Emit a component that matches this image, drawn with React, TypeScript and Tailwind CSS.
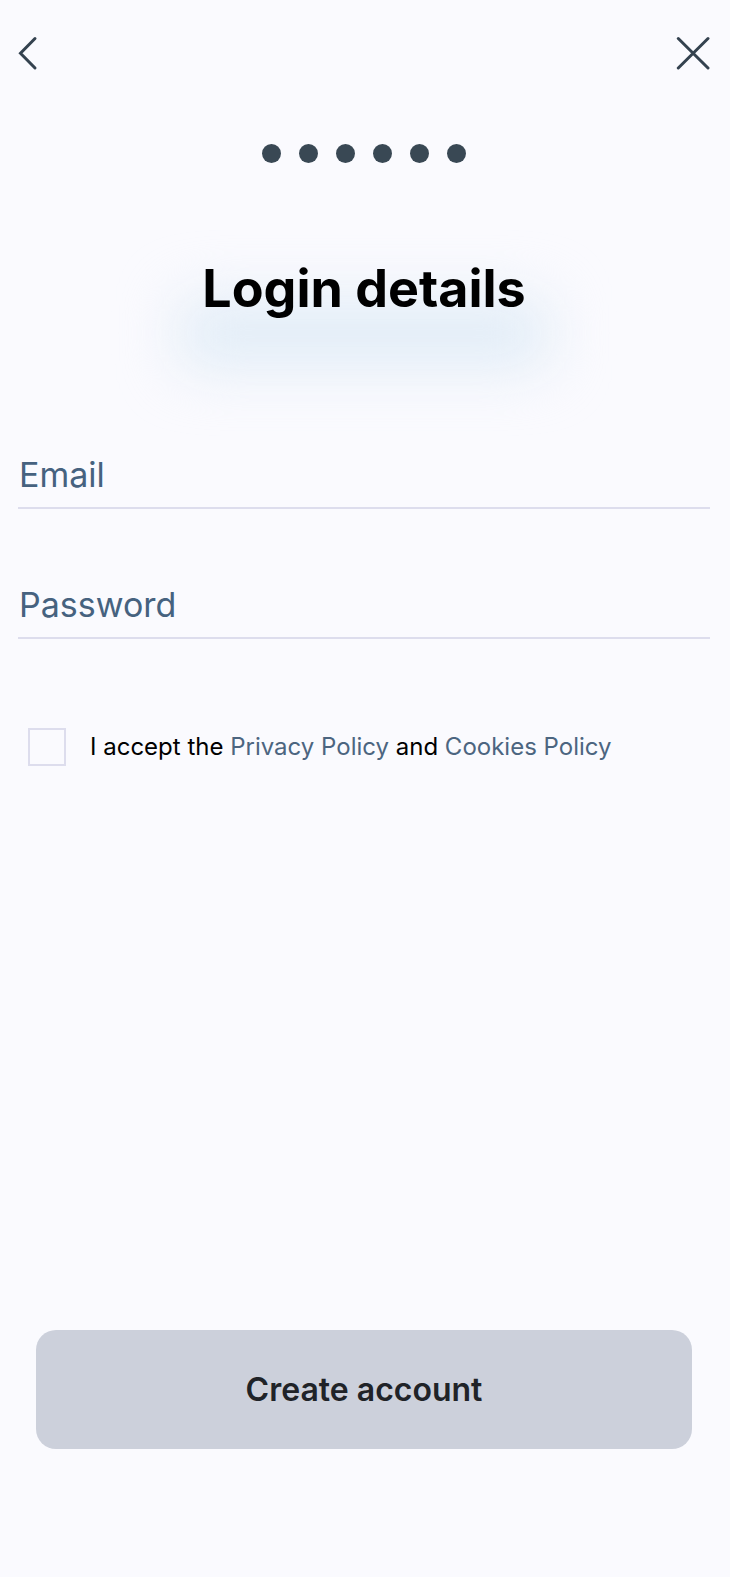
import React from "react";

function Field({ id, label, type }: { id: string; label: string; type: string }) {
  return (
    <div className="grid h-[66px] border-b-2 border-[#dddded] text-[34px] leading-[64px] text-[#46627f]">
      <input
        id={id}
        type={type}
        placeholder=" "
        className="peer col-start-1 row-start-1 w-full bg-transparent px-px outline-none"
      />
      <label
        htmlFor={id}
        className="pointer-events-none col-start-1 row-start-1 px-px peer-[:not(:placeholder-shown)]:invisible"
      >
        {label}
      </label>
    </div>
  );
}

export default function App() {
  return (
    <main className="flex min-h-screen flex-col bg-[#fafafe] pt-9 pr-5 pb-32 pl-[18px] font-['Inter',sans-serif] text-black">
      <header className="flex items-center justify-between">
        <button type="button" aria-label="Back">
          <svg className="block" width="20" height="36" viewBox="0 0 20 36" fill="none" stroke="#34424f" strokeWidth="3" strokeLinecap="round">
            <path d="M17 2.5L2.5 17.3L17 32" />
          </svg>
        </button>
        <button type="button" aria-label="Close">
          <svg className="block" width="36" height="36" viewBox="0 0 36 36" fill="none" stroke="#34424f" strokeWidth="3" strokeLinecap="round">
            <path d="M4.3 2.5L34 32M34 2.5L4.3 32" />
          </svg>
        </button>
      </header>
      <div className="mt-[72px] flex justify-center gap-[18px]" aria-hidden="true">
        {[0, 1, 2, 3, 4, 5].map((step) => (
          <span key={step} className="size-[19px] rounded-full bg-[#394854]" />
        ))}
      </div>
      <h1 className="mt-[94px] text-center text-[52px] leading-[64px] font-bold">
        <span className="relative isolate inline-block">
          <span aria-hidden="true" className="absolute -inset-x-6 top-10 -z-10 h-[72px] rounded-2xl bg-[#e2edf7] blur-[28px]" />
          Login details
        </span>
      </h1>
      <form className="mt-[122px] flex grow flex-col" onSubmit={(event) => event.preventDefault()}>
        <div className="flex flex-col gap-16">
          <Field id="email" label="Email" type="email" />
          <Field id="password" label="Password" type="password" />
        </div>
        <div className="mt-[89px] flex items-center gap-6 pl-[10px]">
          <input
            id="accept"
            type="checkbox"
            className="size-[38px] shrink-0 appearance-none border-2 border-[#dddded] bg-transparent checked:bg-[#46627f]"
          />
          <label htmlFor="accept" className="text-[24px] leading-8">
            I accept the <a href="#privacy" className="text-[#4c6580]">Privacy Policy</a> and{" "}
            <a href="#cookies" className="text-[#4c6580]">Cookies Policy</a>
          </label>
        </div>
        <div className="mt-auto px-[18px]">
          <button type="submit" className="block h-[119px] w-full rounded-[20px] bg-[#ccd0db] text-[32px] font-semibold text-[#202328]">
            Create account
          </button>
        </div>
      </form>
    </main>
  );
}
